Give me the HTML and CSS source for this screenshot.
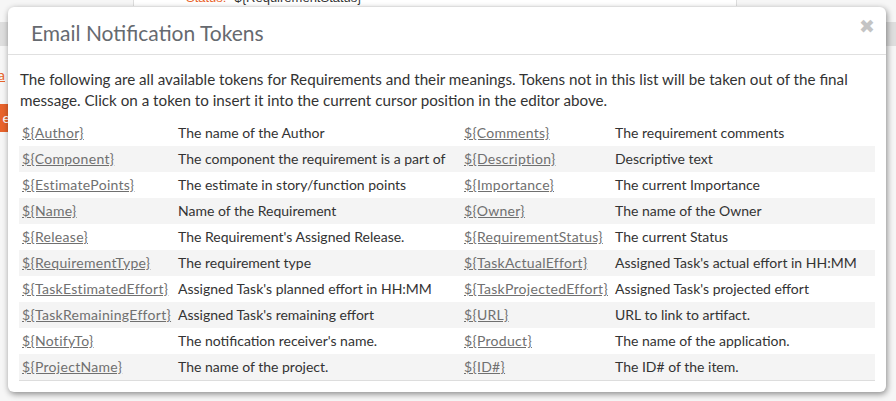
FILE: index.html
```html
<!DOCTYPE html>
<html>
<head>
<meta charset="utf-8">
<link rel="stylesheet" href="styles.css">
</head>
<body>
<div class="page">
  <div class="topbox"><span class="lbl">Status:</span><span class="val">${RequirementStatus}</span></div>
  <div class="band"></div>
  <div class="leftstuff">
    <span class="alink">a</span>
    <span class="obtn">e</span>
  </div>
</div>
<div class="modal">
  <div class="modal-header">
    <h4 class="modal-title">Email Notification Tokens</h4>
    <span class="close">&#x2716;</span>
  </div>
  <div class="modal-body">
    <p class="intro">The following are all available tokens for Requirements and their meanings. Tokens not in this list will be taken out of the final message. Click on a token to insert it into the current cursor position in the editor above.</p>
    <table class="tokens">
      <colgroup><col class="c1"><col class="c2"><col class="c3"><col class="c4"></colgroup>
      <tr><td><a>${Author}</a></td><td>The name of the Author</td><td><a>${Comments}</a></td><td>The requirement comments</td></tr>
      <tr><td><a>${Component}</a></td><td>The component the requirement is a part of</td><td><a>${Description}</a></td><td>Descriptive text</td></tr>
      <tr><td><a>${EstimatePoints}</a></td><td>The estimate in story/function points</td><td><a>${Importance}</a></td><td>The current Importance</td></tr>
      <tr><td><a>${Name}</a></td><td>Name of the Requirement</td><td><a>${Owner}</a></td><td>The name of the Owner</td></tr>
      <tr><td><a>${Release}</a></td><td>The Requirement's Assigned Release.</td><td><a>${RequirementStatus}</a></td><td>The current Status</td></tr>
      <tr><td><a>${RequirementType}</a></td><td>The requirement type</td><td><a>${TaskActualEffort}</a></td><td>Assigned Task's actual effort in HH:MM</td></tr>
      <tr><td><a>${TaskEstimatedEffort}</a></td><td>Assigned Task's planned effort in HH:MM</td><td><a>${TaskProjectedEffort}</a></td><td>Assigned Task's projected effort</td></tr>
      <tr><td><a>${TaskRemainingEffort}</a></td><td>Assigned Task's remaining effort</td><td><a>${URL}</a></td><td>URL to link to artifact.</td></tr>
      <tr><td><a>${NotifyTo}</a></td><td>The notification receiver's name.</td><td><a>${Product}</a></td><td>The name of the application.</td></tr>
      <tr><td><a>${ProjectName}</a></td><td>The name of the project.</td><td><a>${ID#}</a></td><td>The ID# of the item.</td></tr>
    </table>
  </div>
</div>
</body>
</html>
```
FILE: styles.css
```css
html, body {
  margin: 0;
  padding: 0;
  width: 896px;
  height: 401px;
  overflow: hidden;
  background: #f4f4f4;
  font-family: Lato, "Open Sans", sans-serif;
}
.page {
  position: relative;
  width: 896px;
  height: 401px;
  background: #f6f6f6;
}
.topbox {
  position: absolute;
  left: 133px;
  top: -10px;
  width: 602px;
  height: 16px;
  background: #fff;
  border-left: 1px solid #ddd;
  border-right: 1px solid #ddd;
  font-family: "Liberation Sans", sans-serif;
  font-size: 13px;
  line-height: 16px;
}
.topbox .lbl { color: #e8632b; margin-left: 52px; }
.topbox .val { color: #333; margin-left: 8px; }
.band {
  position: absolute;
  left: 0;
  top: 22px;
  width: 896px;
  height: 24px;
  background: #dedede;
}
.leftstuff {
  position: absolute;
  left: 0;
  top: 60px;
}
.alink {
  position: absolute;
  left: -2px;
  top: 6px;
  color: #e8632b;
  text-decoration: underline;
  font-size: 14px;
}
.obtn {
  position: absolute;
  left: -4px;
  top: 44px;
  width: 14px;
  height: 28px;
  background: #e8632b;
  color: #fff;
  font-size: 14px;
  line-height: 28px;
  text-align: right;
}
.modal {
  position: absolute;
  left: 8px;
  top: 7px;
  width: 878px;
  height: 385px;
  box-sizing: border-box;
  background: #fff;
  border-radius: 6px;
  box-shadow: 1px 2px 6px rgba(0,0,0,0.45);
}
.modal-header {
  height: 48px;
  box-sizing: border-box;
  border-bottom: 1px solid #e0e0e0;
  display: flex;
  align-items: center;
  justify-content: space-between;
  padding: 4px 11px 0 23px;
}
.modal-title {
  margin: 0;
  font-size: 21px;
  font-weight: normal;
  color: #666a70;
  line-height: 26px;
}
.close {
  color: #c4c4c4;
  font-size: 19px;
  line-height: 20px;
  font-family: "DejaVu Sans", sans-serif;
  font-weight: bold;
  margin-top: -14px;
}
.modal-body {
  padding: 14px 11px 12px 11px;
}
.intro {
  margin: 0 0 9px 1px;
  font-size: 15.2px;
  line-height: 21px;
  color: #333;
}
.tokens {
  width: 856px;
  border-collapse: collapse;
  font-size: 14px;
  color: #333;
  border-bottom: 1px solid #ddd;
}
.c1 { width: 156px; }
.c2 { width: 286px; }
.c3 { width: 151px; }
.c4 { width: 263px; }
.tokens td {
  height: 26px;
  padding: 0 3px;
  box-sizing: border-box;
  white-space: nowrap;
  line-height: 26px;
}
.tokens tr:nth-child(even) td {
  background: #f4f4f4;
}
.tokens a {
  color: #707070;
  text-decoration: underline;
  letter-spacing: 0.3px;
}
```
